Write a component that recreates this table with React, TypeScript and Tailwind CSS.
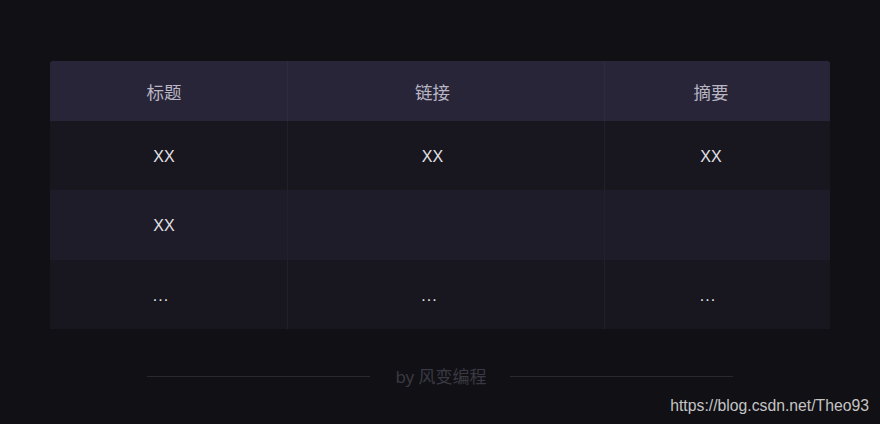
const headers = ["标题", "链接", "摘要"];

const rows = [
  ["XX", "XX", "XX"],
  ["XX", "", ""],
  ["...", "...", "..."],
];

const cols = ["w-[237px] pr-[9px]", "w-[317px] pr-[27px]", "w-[226px] pr-[13px]"];

export default function App() {
  return (
    <div
      className="relative h-[424px] w-[880px] overflow-hidden bg-[#111015]"
      style={{ fontFamily: '"Noto Sans", "Noto Sans CJK SC", sans-serif' }}
    >
      <div className="px-[50px] pt-[61px]">
        <div className="flex h-[60px] rounded-t-[3px] bg-[#282539]">
          {headers.map((h, i) => (
            <div
              key={h}
              className={`flex items-center justify-center pt-[2px] text-[17.5px] text-[#b9b6c4] ${cols[i]} ${
                i > 0 ? "border-l border-[#2e2b40]" : ""
              }`}
            >
              {h}
            </div>
          ))}
        </div>
        {rows.map((row, r) => (
          <div
            key={r}
            className={`flex ${r === 1 ? "h-[70px] bg-[#1e1c28]" : "h-[69px] bg-[#18161f]"}`}
          >
            {row.map((c, i) => (
              <div
                key={i}
                className={`flex items-center justify-center pt-[2px] text-[16px] text-[#e2e1e6] ${cols[i]} ${
                  i > 0 ? "border-l border-[#22202c]" : ""
                }`}
                style={{ fontFamily: '"Liberation Sans", Arial, sans-serif' }}
              >
                <span className={c === "..." ? "mr-[6px] tracking-[1px]" : ""}>{c}</span>
              </div>
            ))}
          </div>
        ))}
      </div>

      <div className="mt-[35px] flex items-center justify-center">
        <div className="h-px w-[223px] bg-[#2a2930]" />
        <div className="pl-[25px] pr-[23px] text-[17px] text-[#3a3943]">by 风变编程</div>
        <div className="h-px w-[223px] bg-[#2a2930]" />
      </div>

      <div
        className="absolute right-[11px] top-[394px] text-[15.75px] text-[#c4c4c4]"
        style={{ fontFamily: '"Liberation Sans", Arial, sans-serif' }}
      >
        https://blog.csdn.net/Theo93
      </div>
    </div>
  );
}
